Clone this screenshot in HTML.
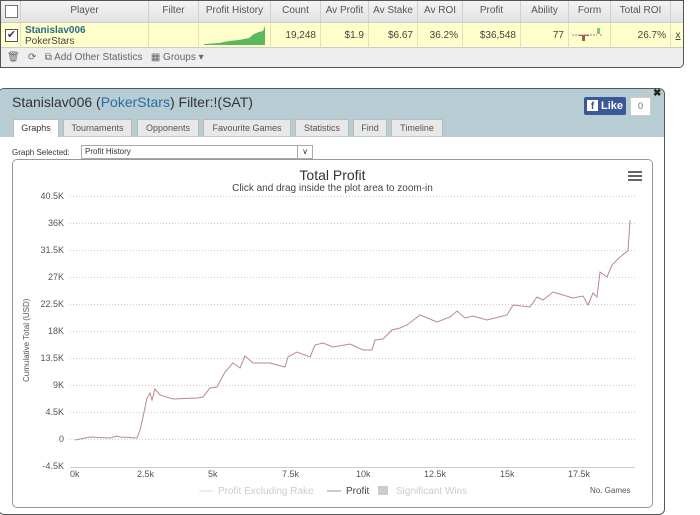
<!DOCTYPE html>
<html><head><style>
body{margin:0;width:700px;height:509px;background:#fff;font-family:"Liberation Sans",sans-serif;position:relative;overflow:hidden}
.a{position:absolute}
#tbl{left:0;top:0;width:684px;height:68px;border:1px solid #555;border-radius:0 0 5px 0;box-sizing:border-box;overflow:hidden;background:#eee}
.h{top:0;height:22px;background:linear-gradient(#f4f4f4,#e2e2e2);border-bottom:1px solid #ccc;font-size:10px;color:#555;text-align:center;line-height:20px;box-sizing:border-box;border-right:1px solid #d0d0d0}
.d{top:22px;height:25px;background:#ffffcc;border-bottom:1px solid #ccc;font-size:10px;color:#444;line-height:25px;box-sizing:border-box;border-right:1px solid #e0e0c0;text-align:right;padding-right:4px}
#panel{left:-2px;top:88px;width:665px;height:425px;border:1px solid #555;border-radius:6px;background:#fff;overflow:hidden}
.tab{top:119px;height:17px;background:#e8e8e8;border:1px solid #bbb;border-bottom:none;font-size:9px;color:#555;text-align:center;line-height:17px;box-sizing:border-box}
.yl{right:636px;font-size:9px;color:#555;text-align:right}
.xl{top:469px;font-size:9px;color:#555}
</style></head><body>
<div id="tbl" class="a">
<div class="a h" style="left:0;width:20px"><div style="width:11px;height:11px;border:1px solid #777;background:#fff;margin:4px"></div></div>
<div class="a h" style="left:20px;width:128px">Player</div>
<div class="a h" style="left:148px;width:50px">Filter</div>
<div class="a h" style="left:198px;width:72px">Profit History</div>
<div class="a h" style="left:270px;width:50px">Count</div>
<div class="a h" style="left:320px;width:48px">Av Profit</div>
<div class="a h" style="left:368px;width:49px">Av Stake</div>
<div class="a h" style="left:417px;width:45px">Av ROI</div>
<div class="a h" style="left:462px;width:58px">Profit</div>
<div class="a h" style="left:520px;width:48px">Ability</div>
<div class="a h" style="left:568px;width:42px">Form</div>
<div class="a h" style="left:610px;width:60px">Total ROI</div>
<div class="a h" style="left:670px;width:14px;border-right:none"></div>
<div class="a d" style="left:0;width:20px;padding:0"><div style="width:11px;height:11px;border:1px solid #555;background:#fff;margin:6px 4px;font-size:11px;line-height:11px;text-align:center">✔</div></div>
<div class="a d" style="left:20px;width:128px;text-align:left;padding-left:4px;line-height:11px;padding-top:2px"><b style="color:#2a6b8a">Stanislav006</b><br>PokerStars</div>
<div class="a d" style="left:148px;width:50px"></div>
<div class="a d" style="left:198px;width:72px;padding:0"><svg width="72" height="25"><path d="M5 21 L20 20 L30 18 L40 17 L50 15 L55 11 L60 9 L64 8 L66 3 L66 22 L5 22Z" fill="#5cb85c"/></svg></div>
<div class="a d" style="left:270px;width:50px">19,248</div>
<div class="a d" style="left:320px;width:48px">$1.9</div>
<div class="a d" style="left:368px;width:49px">$6.67</div>
<div class="a d" style="left:417px;width:45px">36.2%</div>
<div class="a d" style="left:462px;width:58px">$36,548</div>
<div class="a d" style="left:520px;width:48px">77</div>
<div class="a d" style="left:568px;width:42px;padding:0"><svg width="42" height="25"><path d="M3 12H28M31 12H34" stroke="#b77" stroke-dasharray="2 1"/><rect x="13" y="12" width="3" height="6" fill="#a55"/><rect x="10" y="12" width="10" height="1" fill="#a55"/><rect x="28" y="5" width="3" height="6" fill="#7c7"/></svg></div>
<div class="a d" style="left:610px;width:60px">26.7%</div>
<div class="a d" style="left:670px;width:14px;border-right:none;text-align:center;padding:0;text-decoration:underline">x</div>
<div class="a" style="left:6px;top:51px;font-size:10px;color:#666;white-space:nowrap">🗑&nbsp;&nbsp; ⟳ &nbsp;&nbsp;⧉ Add Other Statistics &nbsp;&nbsp;▦ Groups ▾</div>
</div>

<div id="panel" class="a">
<div class="a" style="left:0;top:0;width:665px;height:48px;background:#b7cdd3"></div>
</div>
<div class="a" style="left:12px;top:94px;font-size:14px;color:#333">Stanislav006 (<span style="color:#2a6ba0">PokerStars</span>) Filter:!(SAT)</div>
<div class="a" style="left:584px;top:97px;width:42px;height:18px;background:#3b5998;border-radius:2px;color:#fff;font-size:11px;font-weight:bold;line-height:18px"><span style="display:inline-block;width:11px;height:11px;background:#fff;color:#3b5998;margin:0 3px 0 3px;line-height:13px;text-align:center;font-size:10px">f</span>Like</div>
<div class="a" style="left:630px;top:97px;width:19px;height:17px;background:#fff;border:1px solid #ccc;font-size:9px;color:#666;text-align:center;line-height:17px">0</div>
<div class="a" style="left:653px;top:88px;font-size:10px;font-weight:bold;color:#222">✖</div>
<div class="a tab" style="left:13px;width:46px;background:#fff;height:18px;color:#333">Graphs</div>
<div class="a tab" style="left:63px;width:69px">Tournaments</div>
<div class="a tab" style="left:137px;width:62px">Opponents</div>
<div class="a tab" style="left:203px;width:88px">Favourite Games</div>
<div class="a tab" style="left:295px;width:54px">Statistics</div>
<div class="a tab" style="left:353px;width:34px">Find</div>
<div class="a tab" style="left:391px;width:52px">Timeline</div>
<div class="a" style="left:12px;top:148px;font-size:8px;color:#333">Graph Selected:</div>
<div class="a" style="left:81px;top:145px;width:227px;height:12px;border:1px solid #aaa;font-size:8px;color:#333;line-height:12px;padding-left:3px;box-sizing:content-box">Profit History<span style="position:absolute;right:0;top:0;width:14px;height:12px;border-left:1px solid #aaa;text-align:center;font-size:8px">∨</span></div>
<div class="a" style="left:12px;top:159px;width:639px;height:347px;border:1px solid #999;border-radius:5px"></div>
<div class="a" style="left:0;top:167px;width:665px;text-align:center;font-size:14px;color:#333">Total Profit</div>
<div class="a" style="left:0;top:183px;width:665px;text-align:center;font-size:10px;color:#444">Click and drag inside the plot area to zoom-in</div>
<div class="a" style="left:628px;top:171px;width:14px;height:2px;background:#666;box-shadow:0 4px 0 #666,0 8px 0 #666"></div>
<div class="a" style="font-size:8px;color:#555;transform:rotate(-90deg);transform-origin:0 0;white-space:nowrap;left:22px;top:382px">Cumulative Total (USD)</div>
<svg class="a" style="left:0;top:0" width="700" height="509">
<g stroke="#ccc" stroke-dasharray="1 2">
<path d="M70 196.5H635M70 223.5H635M70 250.5H635M70 277.5H635M70 304.5H635M70 331.5H635M70 358.5H635M70 385.5H635M70 412.5H635M70 439.5H635"/>
</g>
<path d="M70 467.5H635" stroke="#ccc"/>
<polyline fill="none" stroke="#b88" stroke-width="1" points="75,440 90,437 110,438 117,436 120,437 137,438 140,430 143,417 147,398 150,393 152,400 155,389 160,395 173,399 197,398 203,397 210,388 217,387 225,372 233,363 240,368 245,356 253,363 270,363 285,367 288,357 297,352 310,357 315,345 323,343 333,347 350,344 363,350 372,350 375,340 383,339 392,330 400,328 407,325 420,315 437,322 450,317 457,311 465,318 473,316 487,320 507,315 513,305 530,307 537,297 543,300 553,292 573,298 583,296 588,305 593,293 597,297 600,272 607,277 612,265 620,257 625,253 628,251 630,220"/>
<path d="M199 491H213" stroke="#ddd"/><path d="M327 491H341" stroke="#b88"/><rect x="378" y="486" width="10" height="9" fill="#ccc"/>
</svg>
<div class="a yl" style="top:191px">40.5K</div>
<div class="a yl" style="top:218px">36K</div>
<div class="a yl" style="top:245px">31.5K</div>
<div class="a yl" style="top:272px">27K</div>
<div class="a yl" style="top:299px">22.5K</div>
<div class="a yl" style="top:326px">18K</div>
<div class="a yl" style="top:353px">13.5K</div>
<div class="a yl" style="top:380px">9K</div>
<div class="a yl" style="top:407px">4.5K</div>
<div class="a yl" style="top:434px">0</div>
<div class="a yl" style="top:461px">-4.5K</div>
<div class="a xl" style="left:70px">0k</div>
<div class="a xl" style="left:137px">2.5k</div>
<div class="a xl" style="left:282px">7.5k</div>
<div class="a xl" style="left:208px">5k</div>
<div class="a xl" style="left:356px">10k</div>
<div class="a xl" style="left:424px">12.5k</div>
<div class="a xl" style="left:500px">15k</div>
<div class="a xl" style="left:568px">17.5k</div>
<div class="a" style="left:218px;top:486px;font-size:10px;color:#ccc">Profit Excluding Rake</div>
<div class="a" style="left:346px;top:486px;font-size:10px;color:#444">Profit</div>
<div class="a" style="left:396px;top:486px;font-size:10px;color:#ccc">Significant Wins</div>
<div class="a" style="left:590px;top:486px;font-size:8px;color:#555">No. Games</div>
</body></html>
